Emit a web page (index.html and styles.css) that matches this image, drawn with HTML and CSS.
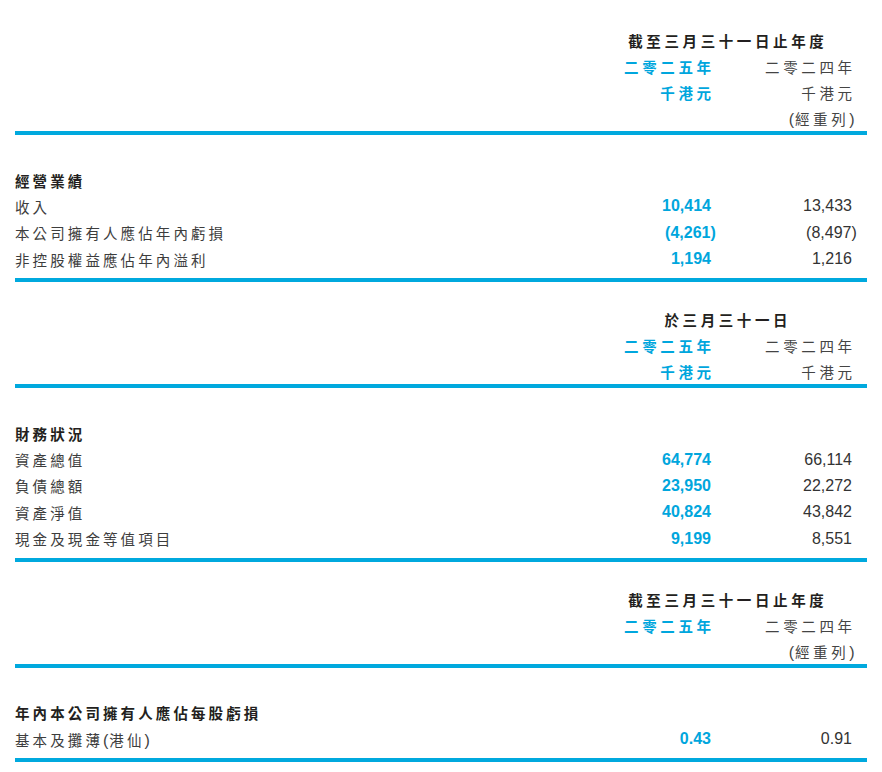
FILE: index.html
```html
<!DOCTYPE html>
<html lang="zh-Hant">
<head>
<meta charset="utf-8">
<link rel="stylesheet" href="styles.css">
</head>
<body>
<main class="page">

  <section class="block first">
    <div class="head">
      <div class="hrow"><span class="title"><span class="ls">截至三月三十一日止年度</span></span></div>
      <div class="hrow"><span class="c1 cur"><span class="ls">二零二五年</span></span><span class="c2"><span class="ls">二零二四年</span></span></div>
      <div class="hrow"><span class="c1 cur"><span class="ls">千港元</span></span><span class="c2"><span class="ls">千港元</span></span></div>
      <div class="hrow"><span class="c1"></span><span class="c2"><span class="ls"><span class="p">(</span>經重列<span class="p">)</span></span></span></div>
    </div>
    <div class="rule"></div>
    <div class="body">
      <div class="row"><span class="label strong">經營業績</span></div>
      <div class="row"><span class="label">收入</span><span class="n1">10,414</span><span class="n2">13,433</span></div>
      <div class="row"><span class="label">本公司擁有人應佔年內虧損</span><span class="n1">(4,261<span class="hang">)</span></span><span class="n2">(8,497<span class="hang">)</span></span></div>
      <div class="row"><span class="label">非控股權益應佔年內溢利</span><span class="n1">1,194</span><span class="n2">1,216</span></div>
    </div>
    <div class="rule"></div>
  </section>

  <section class="block">
    <div class="head">
      <div class="hrow"><span class="title"><span class="ls">於三月三十一日</span></span></div>
      <div class="hrow"><span class="c1 cur"><span class="ls">二零二五年</span></span><span class="c2"><span class="ls">二零二四年</span></span></div>
      <div class="hrow"><span class="c1 cur"><span class="ls">千港元</span></span><span class="c2"><span class="ls">千港元</span></span></div>
    </div>
    <div class="rule"></div>
    <div class="body">
      <div class="row"><span class="label strong">財務狀況</span></div>
      <div class="row"><span class="label">資產總值</span><span class="n1">64,774</span><span class="n2">66,114</span></div>
      <div class="row"><span class="label">負債總額</span><span class="n1">23,950</span><span class="n2">22,272</span></div>
      <div class="row"><span class="label">資產淨值</span><span class="n1">40,824</span><span class="n2">43,842</span></div>
      <div class="row"><span class="label">現金及現金等值項目</span><span class="n1">9,199</span><span class="n2">8,551</span></div>
    </div>
    <div class="rule"></div>
  </section>

  <section class="block">
    <div class="head">
      <div class="hrow"><span class="title"><span class="ls">截至三月三十一日止年度</span></span></div>
      <div class="hrow"><span class="c1 cur"><span class="ls">二零二五年</span></span><span class="c2"><span class="ls">二零二四年</span></span></div>
      <div class="hrow"><span class="c1"></span><span class="c2"><span class="ls"><span class="p">(</span>經重列<span class="p">)</span></span></span></div>
    </div>
    <div class="rule"></div>
    <div class="body">
      <div class="row"><span class="label strong">年內本公司擁有人應佔每股虧損</span></div>
      <div class="row"><span class="label">基本及攤薄<span class="p">(</span>港仙<span class="p">)</span></span><span class="n1">0.43</span><span class="n2">0.91</span></div>
    </div>
    <div class="rule"></div>
  </section>

</main>
</body>
</html>
```

FILE: styles.css
```css
* { box-sizing: border-box; }

html, body {
  margin: 0;
  padding: 0;
  background: #ffffff;
}

.page {
  width: 882px;
  padding: 0 15px;
  font-family: "Liberation Sans", "Noto Sans CJK TC", sans-serif;
  color: #3a3a3a;
}

.block {
  padding-top: 26px;
}

.block.first {
  padding-top: 29px;
}

.head {
  margin-bottom: -2px;
}

.hrow {
  display: flex;
  justify-content: flex-end;
  height: 26px;
  line-height: 26px;
  padding-right: 15px;
  font-size: 14.5px;
  letter-spacing: 3.6px;
  white-space: nowrap;
}

.hrow .ls {
  margin-right: -3.6px;
}

.title {
  width: 261px;
  padding-left: 9px;
  text-align: center;
  font-weight: 700;
  color: #231f20;
}

.c1 {
  width: 120px;
  text-align: right;
}

.c2 {
  width: 141px;
  text-align: right;
  color: #444444;
}

.cur {
  color: #00a6dd;
  font-weight: 700;
}

.p {
  font-size: 16px;
  letter-spacing: 1px;
}

.rule {
  height: 4px;
  background: #00a9de;
}

.body {
  padding-top: 32px;
  padding-bottom: 6px;
}

.row {
  display: flex;
  align-items: center;
  height: 26.3px;
  padding-right: 15px;
  white-space: nowrap;
}

.label {
  flex: 1;
  font-size: 14.5px;
  letter-spacing: 3.1px;
  color: #3d3d3d;
}

.label.strong {
  font-weight: 700;
  color: #231f20;
}

.n1, .n2 {
  font-size: 16px;
  text-align: right;
}

.n1 {
  width: 120px;
  font-weight: 700;
  color: #00a6dd;
}

.n2 {
  width: 141px;
  color: #333333;
}

.hang {
  margin-right: -0.3em;
}
```
